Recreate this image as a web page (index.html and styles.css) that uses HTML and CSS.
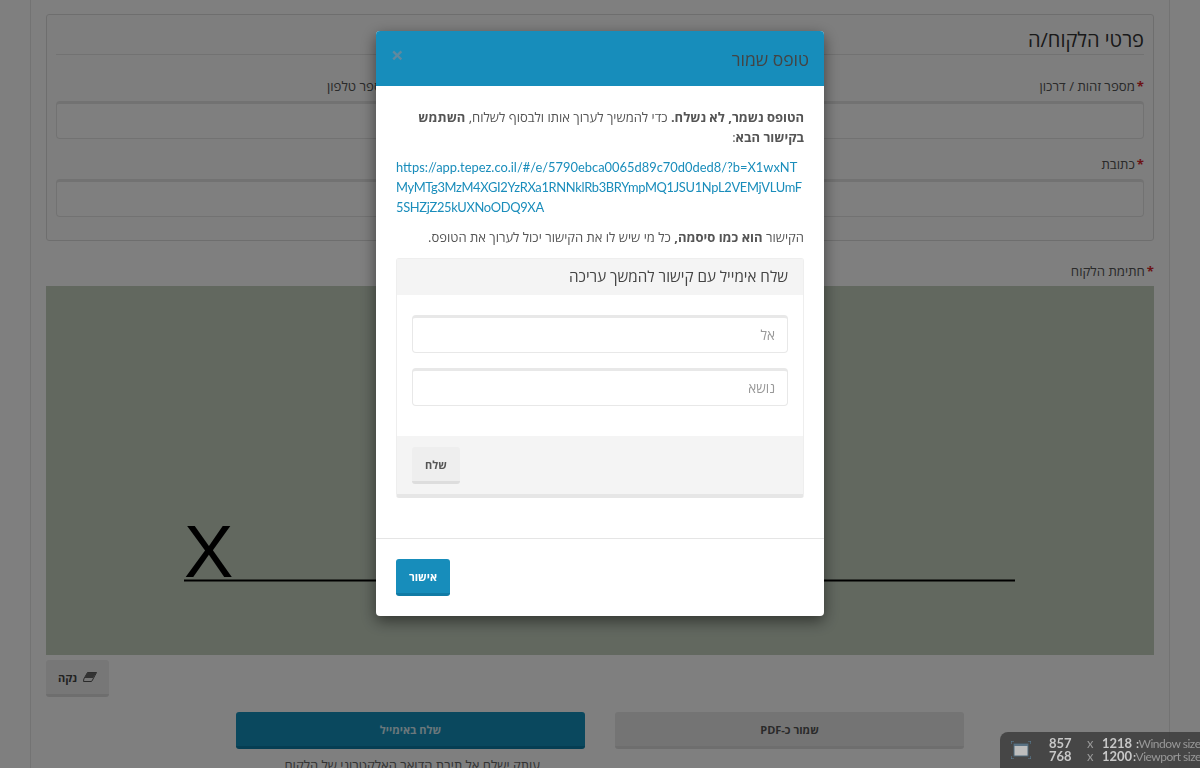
FILE: index.html
```html
<!DOCTYPE html>
<html lang="he" dir="rtl">
<head>
<meta charset="utf-8">
<title>טופס שמור</title>
<link rel="stylesheet" href="styles.css">
</head>
<body>
<main class="page">
  <section class="panel">
    <h2 class="panel-title">פרטי הלקוח/ה</h2>
    <div class="field-row">
      <div class="field">
        <label class="label"><span class="req">*</span>מספר זהות / דרכון</label>
        <div class="input"></div>
      </div>
      <div class="field">
        <label class="label label-plain">מספר טלפון</label>
        <div class="input"></div>
      </div>
    </div>
    <div class="field field-half">
      <label class="label"><span class="req">*</span>כתובת</label>
      <div class="input"></div>
    </div>
  </section>
  <label class="label sig-label"><span class="req">*</span>חתימת הלקוח</label>
  <div class="signature">
    <svg class="sig-svg" width="1108" height="369" viewBox="0 0 1108 369">
      <text class="sig-x" x="138" y="291">X</text>
      <line x1="138" y1="294.5" x2="969" y2="294.5" stroke="#000" stroke-width="2"/>
    </svg>
  </div>
  <button class="btn btn-clear" type="button">
    <svg class="eraser" width="14" height="10" viewBox="0 0 14 10"><path d="M4.5.5H13.5L9.5 8 8.5 9.5H.5L.8 7Z" fill="none" stroke="#555" stroke-width="1"/><path d="M4.5.5H13.5L10 6H1.5Z" fill="#666"/></svg>
    נקה
  </button>
  <div class="actions">
    <div class="action">
      <button class="btn btn-wide" type="button">שמור כ-PDF</button>
    </div>
    <div class="action">
      <button class="btn btn-wide btn-primary" type="button">שלח באימייל</button>
      <p class="hint">עותק ישלח אל תיבת הדואר האלקטרוני של הלקוח.</p>
    </div>
  </div>
</main>

<div class="backdrop">
  <div class="modal">
    <header class="modal-head">
      <h3 class="modal-title">טופס שמור</h3>
      <span class="close">&times;</span>
    </header>
    <div class="modal-body">
      <p class="para"><b>הטופס נשמר, לא נשלח.</b> כדי להמשיך לערוך אותו ולבסוף לשלוח, <b>השתמש בקישור הבא</b>:</p>
      <p class="para link" dir="ltr">https://app.tepez.co.il/#/e/5790ebca0065d89c70d0ded8/?b=X1wxNT<wbr><span class="link-tight">MyMTg3MzM4XGI2YzRXa1RNNklRb3BRYmpMQ1JSU1NpL2VEMjVLUmF<wbr>5SHZjZ25kUXNoODQ9XA</span></p>
      <p class="para">הקישור <b>הוא כמו סיסמה,</b> כל מי שיש לו את הקישור יכול לערוך את הטופס.</p>
      <div class="mail-panel">
        <div class="mail-head">שלח אימייל עם קישור להמשך עריכה</div>
        <div class="mail-body">
          <div class="mail-input">אל</div>
          <div class="mail-input">נושא</div>
        </div>
        <div class="mail-foot">
          <button class="btn btn-send" type="button">שלח</button>
        </div>
      </div>
    </div>
    <footer class="modal-foot">
      <button class="btn btn-ok" type="button">אישור</button>
    </footer>
  </div>
</div>

<aside class="size-widget" dir="ltr">
  <svg class="size-icon" width="20" height="18" viewBox="0 0 20 18"><rect x="3" y="3" width="14" height="12" fill="#bdbdbd" stroke="#4f6a7c" stroke-width="1"/><rect x="3" y="3" width="14" height="2" fill="#5a7284"/><path d="M0 3V0H3M17 0H20V3M0 15V18H3M17 18H20V15" fill="none" stroke="#5f86a0" stroke-width="1"/></svg>
  <div class="size-grid">
    <b>857</b><span>x</span><b>1218</b><span class="size-name size-first"><b>:</b>Window size</span>
    <b>768</b><span>x</span><b>1200</b><span class="size-name"><b>:</b>Viewport size</span>
  </div>
</aside>
</body>
</html>
```

FILE: styles.css
```css
* { box-sizing: border-box; }
html, body { margin: 0; height: 768px; overflow: hidden; }
body {
  background: #fff;
  color: #555;
  font-family: "Open Sans", "Liberation Sans", sans-serif;
  font-size: 13px;
  line-height: 20px;
}
.page {
  margin: 0 30px;
  height: 768px;
  padding: 14px 15px 0;
  border-left: 1px solid #e6e6e6;
  border-right: 1px solid #e6e6e6;
  overflow: hidden;
}
.panel {
  height: 227px;
  border: 1px solid #ddd;
  border-radius: 3px;
  background: #fcfcfc;
  padding: 11px 9px 0;
}
.panel-title {
  margin: 0;
  height: 29px;
  border-bottom: 1px solid #e4e4e4;
  font-size: 20px;
  font-weight: 400;
  line-height: 27px;
  color: #333;
}
.field-row { display: grid; grid-template-columns: 1fr 334px; margin-top: 21px; }
.field-half { width: 100%; margin-top: 15px; }
.label { display: block; height: 20px; color: #555; font-size: 13.2px; line-height: 20px; }
.req { color: #d9262c; font-weight: 700; margin-left: 2px; }
.input {
  height: 38px;
  margin-top: 5px;
  border: 1px solid #e4e4e4;
  border-top-width: 3px;
  border-radius: 4px;
  background: #fff;
}
.sig-label { margin-top: 20px; }
.signature {
  height: 369px;
  margin-top: 5px;
  background: #c4d0bf;
}
.sig-svg { display: block; direction: ltr; }
.sig-x { font-family: "Liberation Sans", sans-serif; font-size: 74px; fill: #000; }
.btn {
  display: block;
  border: 0;
  border-bottom: 3px solid #ddd;
  border-radius: 3px;
  background: #eee;
  color: #555;
  font-family: "Open Sans", "Liberation Sans", sans-serif;
  font-size: 11px;
  font-weight: 700;
  padding: 0;
}
.btn-clear {
  display: flex;
  align-items: center;
  justify-content: center;
  gap: 6px;
  width: 63px;
  height: 37px;
  margin-top: 5px;
  margin-right: auto;
  margin-left: 0;
  color: #444;
}
.actions {
  display: grid;
  grid-template-columns: 349px 349px;
  column-gap: 30px;
  justify-content: center;
  margin-top: 15px;
}
.btn-wide { width: 349px; height: 37px; background: #e8e8e8; border-bottom-color: #ddd; }
.btn-primary { background: #1590bd; border-bottom-color: #0d7da6; color: #d6eef7; }
.hint { margin: 6px 0 0; text-align: center; font-size: 13px; line-height: 20px; color: #666; }

.size-widget {
  position: fixed;
  right: 0;
  bottom: 0;
  width: 200px;
  height: 36px;
  background: rgba(60, 60, 60, .85);
  border-top-left-radius: 8px;
  display: flex;
  align-items: center;
  padding-left: 11px;
  color: #ccc;
  font-family: Lato, "Liberation Sans", sans-serif;
  font-size: 13px;
  line-height: 13px;
  overflow: hidden;
}
.size-icon { flex: none; margin-right: 18px; }
.size-grid {
  display: grid;
  grid-template-columns: 38px 15px 31px auto;
  white-space: nowrap;
}
.size-grid > span { color: #999; }
.size-grid > b { color: #c8c8c8; }
.size-name { font-size: 12px; letter-spacing: -.5px; }
.size-first { padding-left: 3px; }
.size-name b { color: #c8c8c8; }

.backdrop {
  position: fixed;
  inset: 0;
  background: rgba(0, 0, 0, .5);
  display: flex;
  justify-content: center;
  align-items: flex-start;
  padding-top: 31px;
}
.modal {
  width: 448px;
  height: 585px;
  background: #fff;
  border-radius: 4px;
  box-shadow: 0 5px 15px rgba(0, 0, 0, .5);
  display: flex;
  flex-direction: column;
  overflow: hidden;
}
.modal-head {
  flex: none;
  height: 55px;
  background: #178dbb;
  display: flex;
  justify-content: space-between;
  padding: 0 15px;
}
.modal-title { margin: 0; font-size: 17.5px; font-weight: 400; line-height: 57px; color: #444; }
.close { color: #60899f; font-size: 22px; font-weight: 700; line-height: 46px; }
.modal-body { flex: 1; padding: 21px 20px 0; }
.para { margin: 0 0 10px; }
.para b { font-weight: 700; }
.link { color: #1a8dbb; text-align: left; font-family: Lato, sans-serif; font-size: 12.9px; }
.link-tight { letter-spacing: -.32px; }
.mail-panel {
  height: 240px;
  margin-top: 11px;
  border: 1px solid #eee;
  border-bottom: 4px solid #e6e6e6;
  border-radius: 3px;
  display: flex;
  flex-direction: column;
}
.mail-head { flex: none; height: 36px; background: #f4f4f4; padding: 0 15px; font-size: 15.2px; line-height: 34px; color: #444; }
.mail-body { flex: 1; padding: 20px 15px 0; display: flex; flex-direction: column; gap: 15px; }
.mail-input {
  height: 38px;
  border: 1px solid #e8e8e8;
  border-top-width: 3px;
  border-radius: 4px;
  padding: 0 12px;
  font-size: 13.5px;
  line-height: 34px;
  color: #999;
}
.mail-foot { flex: none; height: 58px; background: #f4f4f4; padding: 11px 15px 0; display: flex; justify-content: flex-end; }
.btn-send { width: 48px; height: 37px; }
.modal-foot { flex: none; height: 78px; border-top: 1px solid #e5e5e5; padding: 20px 20px 0; display: flex; justify-content: flex-end; }
.btn-ok { width: 54px; height: 37px; background: #178dbb; border-bottom-color: #117ba5; color: #fff; }
```
